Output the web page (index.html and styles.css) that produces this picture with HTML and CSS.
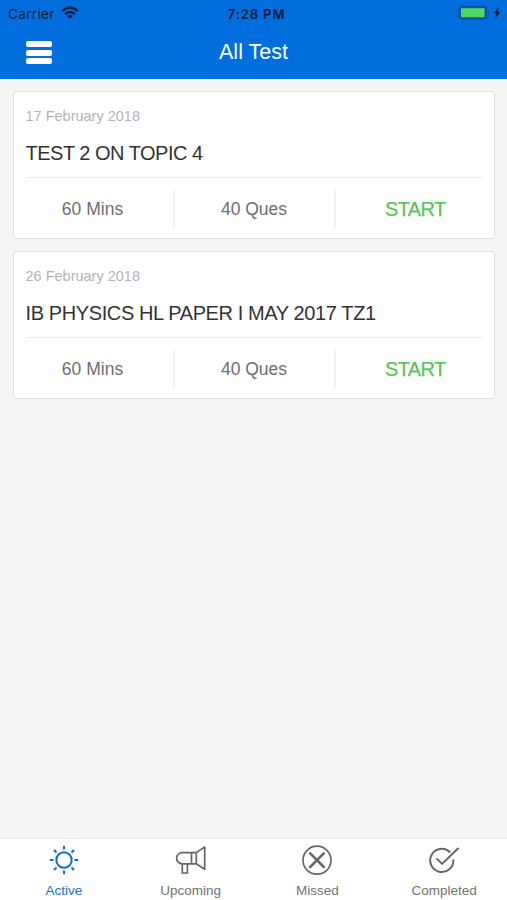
FILE: index.html
```html
<!DOCTYPE html>
<html lang="en">
<head>
<meta charset="utf-8">
<meta name="viewport" content="width=device-width, initial-scale=1">
<title>All Test</title>
<link rel="stylesheet" href="styles.css">
</head>
<body>
<div class="app">
  <header class="header">
    <div class="status">
      <div class="network"><span class="carrier">Carrier</span>
        <svg width="18" height="14" viewBox="0 0 18 14"><g fill="none" stroke="#061a38" stroke-width="2.3"><path d="M1.2 5.1Q9-2 16.8 5.1"/><path d="M4 8.2Q9 3.8 14 8.2"/></g><path d="M9 12.8 6 10.1Q9 7.8 12 10.1Z" fill="#061a38"/></svg>
      </div>
      <span class="time">7:28 PM</span>
      <div class="power">
        <svg width="44" height="16" viewBox="0 0 44 16"><rect x="1" y="1.3" width="27.5" height="12.6" rx="2.8" fill="#0756a8" stroke="#064b95" stroke-width="1"/><rect x="3" y="3.2" width="23.6" height="9" rx="1" fill="#4cd964"/><path d="M30.2 5.3Q32.4 7.6 30.2 9.9Z" fill="#064b95"/><path d="M40.7 2 35.5 8.4H38.5L37 13.6 42.6 6.8H39.4Z" fill="#061a38"/></svg>
      </div>
    </div>
    <div class="nav">
      <div class="menu"><i></i><i></i><i></i></div>
      <h1 class="title">All Test</h1>
    </div>
  </header>
  <main class="list">
    <section class="card">
      <div class="date">17 February 2018</div>
      <h2 class="name tight">TEST 2 ON TOPIC 4</h2>
      <div class="row"><div class="cell">60 Mins</div><div class="cell">40 Ques</div><div class="cell start">START</div></div>
    </section>
    <section class="card">
      <div class="date">26 February 2018</div>
      <h2 class="name">IB PHYSICS HL PAPER I MAY 2017 TZ1</h2>
      <div class="row"><div class="cell">60 Mins</div><div class="cell">40 Ques</div><div class="cell start">START</div></div>
    </section>
  </main>
  <nav class="tabs">
    <div class="tab active">
      <svg class="icon" viewBox="0 0 32 32"><circle cx="16" cy="16" r="7.7"/><path d="M16 1.8V5.4M16 26.6V30.2M1.8 16H5.4M26.6 16H30.2M6 6 8.5 8.5M23.5 23.5 26 26M6 26 8.5 23.5M23.5 8.5 26 6"/></svg>
      <span>Active</span>
    </div>
    <div class="tab">
      <svg class="icon" viewBox="0 0 32 32"><path d="M16.5 8.6H7.2A5.6 5.6 0 0 0 7.2 19.8H16.5ZM16.5 8.6H21.3V19.8H16.5M21.3 8.6 29.7 2.9V25.3L21.3 19.8M7.3 19.8V29H12.4V19.8"/></svg>
      <span>Upcoming</span>
    </div>
    <div class="tab">
      <svg class="icon" viewBox="0 0 32 32"><circle cx="16" cy="16.2" r="14"/><path stroke-width="2.5" d="M9.2 9.4 22.8 23M22.8 9.4 9.2 23"/></svg>
      <span>Missed</span>
    </div>
    <div class="tab">
      <svg class="icon" viewBox="0 0 32 32"><path stroke-width="2" d="M21.7 7.9A11.6 11.6 0 1 0 25.4 16.2M9.1 14.9 14.1 19.9 30 4.5"/></svg>
      <span>Completed</span>
    </div>
  </nav>
</div>
</body>
</html>
```
FILE: styles.css
```css
* { box-sizing: border-box; }
body {
  margin: 0;
  background: #f4f4f4;
  font-family: "Liberation Sans", Arial, sans-serif;
  color: #333;
}
.app { display: flex; flex-direction: column; height: 900px; overflow: hidden; }
svg { display: block; }
.header { height: 79px; background: #006edc; flex: none; }
.status {
  display: grid;
  grid-template-columns: 1fr auto 1fr;
  height: 27px;
  padding: 0 5px 0 8px;
  align-items: center;
  color: #061a38;
  font-family: Inter, sans-serif;
  font-size: 13.5px;
}
.network { display: flex; align-items: center; gap: 6px; }
.network svg { margin-top: -1px; }
.carrier { letter-spacing: 0.35px; }
.time { font-weight: 600; letter-spacing: 0.9px; font-size: 13px; padding-left: 3px; }
.power { justify-self: end; margin-top: -1px; }
.nav {
  display: grid;
  grid-template-columns: 1fr auto 1fr;
  align-items: center;
  height: 51px;
  padding: 0 26px;
}
.menu { display: flex; flex-direction: column; gap: 2.4px; width: 26px; }
.menu i { height: 6px; border-radius: 2px; background: #fff; }
.title { margin: 0; color: #fff; font-size: 21.5px; font-weight: 400; line-height: 51px; letter-spacing: 0; }
.list { flex: 1; display: flex; flex-direction: column; gap: 12px; padding: 12px 12px 0 12.5px; }
.card {
  height: 148px;
  padding: 0 12px;
  background: #fff;
  border: 1px solid #dedede;
  border-radius: 4px;
}
.date { padding-top: 15px; line-height: 18px; font-size: 14.5px; color: #b3b3b3; white-space: nowrap; }
.name {
  margin: 0;
  height: 53px;
  padding-top: 15px;
  border-bottom: 1px solid #eaeaea;
  font-size: 20px;
  line-height: 26px;
  font-weight: 400;
  letter-spacing: -0.39px;
  white-space: nowrap;
}
.name.tight { letter-spacing: -0.5px; }
.row { display: grid; grid-template-columns: 149px 161px 1fr; padding-top: 12px; }
.cell {
  height: 38px;
  line-height: 38px;
  text-align: center;
  font-size: 17.5px;
  color: #6e6e6e;
  border-right: 2px solid #f1f1f1;
}
.cell:first-child { padding-right: 13px; }
.cell.start { padding-left: 13px; border: 0; color: #5ac45a; font-size: 20px; letter-spacing: -0.6px; -webkit-text-stroke: 0.25px #5ac45a; }
.tabs {
  flex: none;
  display: grid;
  grid-template-columns: repeat(4, 1fr);
  height: 62px;
  background: #fff;
  border-top: 1px solid #e9e9e9;
}
.tab { display: flex; flex-direction: column; align-items: center; padding: 5px 0 0 1px; font-size: 13.5px; line-height: 16px; color: #737373; }
.tab span { margin-top: 7px; }
.active { color: #1874d2; }
.icon { width: 32px; height: 32px; fill: none; stroke: #666; stroke-width: 1.7; stroke-linecap: round; stroke-linejoin: round; }
.active .icon { stroke: #1269cb; stroke-width: 2; stroke-linecap: butt; }
```
